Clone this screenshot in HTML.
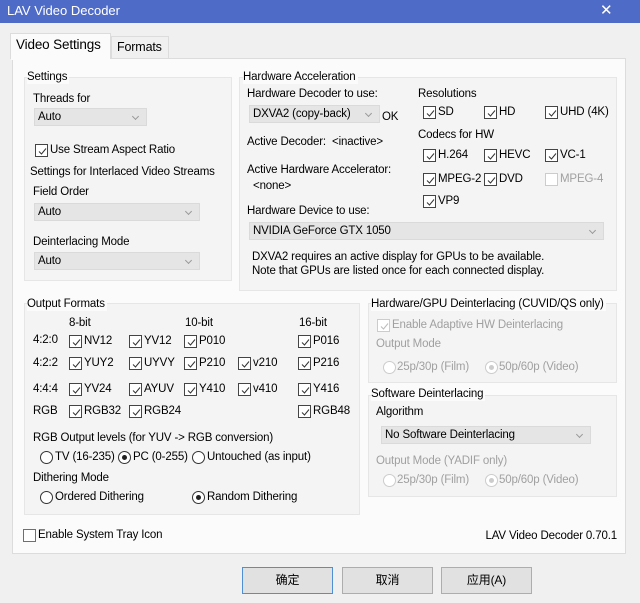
<!DOCTYPE html>
<html><head><meta charset="utf-8"><style>
*{margin:0;padding:0;box-sizing:border-box}
body{width:640px;height:603px;background:#f0f0f0;font-family:"Liberation Sans","Noto Sans CJK SC",sans-serif;font-size:11.5px;letter-spacing:-0.15px;color:#000;position:relative;overflow:hidden}
.a{position:absolute;white-space:nowrap;line-height:14px}
.title{position:absolute;left:0;top:0;width:640px;height:23px;background:#4f6bc8;color:#fff}
.page{position:absolute;left:12px;top:58px;width:614px;height:496px;background:#fbfbfb;border:1px solid #dcdcdc}
.grp{position:absolute;background:#f4f4f4;border:1px solid #e6e6e6}
.combo{position:absolute;height:18px;background:#e5e5e5;border:1px solid #dadada;padding-left:3px;line-height:16px}
.combo:after{content:"";position:absolute;right:8px;top:5px;width:4px;height:4px;border-right:1px solid #999;border-bottom:1px solid #999;transform:rotate(45deg)}
.cb{position:absolute;width:13px;height:13px;border:1px solid #444;background:#fff}
.cb svg{position:absolute;left:1px;top:1px}
.cb.d{border-color:#ccc}
.rb{position:absolute;width:13px;height:13px;border:1px solid #333;border-radius:50%;background:#fff}
.rb.on:after{content:"";position:absolute;left:3px;top:3px;width:5px;height:5px;border-radius:50%;background:#222}
.rb.d{border-color:#ccc}.rb.d.on:after{background:#ccc}
.g{color:#a0a0a0}
.btn{position:absolute;top:567px;width:91px;height:27px;background:#e1e1e1;border:1px solid #adadad;text-align:center;line-height:25px;font-size:12px}
</style></head><body>
<div class="title"><span class="a" style="left:7px;top:3px;font-size:13px;line-height:16px;letter-spacing:0">LAV Video Decoder</span><span class="a" style="left:600px;top:2px;font-size:15px;line-height:18px;font-weight:300">✕</span></div>
<div class="a" style="left:10px;top:33px;width:101px;height:26px;background:#fbfbfb;border:1px solid #dcdcdc;border-bottom:none"></div>
<div class="a" style="left:111px;top:36px;width:58px;height:22px;background:#f0f0f0;border:1px solid #dcdcdc;border-bottom:none"></div>
<div class="page"></div>
<div class="a" style="left:11px;top:34px;width:99px;height:26px;background:#fbfbfb"></div>
<span class="a" style="left:16px;top:37px;font-size:13.5px;line-height:16px">Video Settings</span>
<span class="a" style="left:117px;top:39px;font-size:12.5px;line-height:16px">Formats</span>

<div class="grp" style="left:24px;top:77px;width:208px;height:204px"></div>
<div class="grp" style="left:239px;top:77px;width:378px;height:214px"></div>
<div class="grp" style="left:24px;top:303px;width:336px;height:212px"></div>
<div class="grp" style="left:368px;top:303px;width:249px;height:80px"></div>
<div class="grp" style="left:368px;top:395px;width:249px;height:102px"></div>

<span class="a" style="left:27px;top:70px;background:#fbfbfb;padding-right:2px">Settings</span>
<span class="a" style="left:33px;top:92px">Threads for</span>
<div class="combo" style="left:34px;top:108px;width:113px">Auto</div>
<div class="cb" style="left:35px;top:144px"><svg width="11" height="11"><path d="M2 5.5 L4.5 8 L9 2.5" fill="none" stroke="#333" stroke-width="1"/></svg></div>
<span class="a" style="left:50px;top:143px">Use Stream Aspect Ratio</span>
<span class="a" style="left:30px;top:165px">Settings for Interlaced Video Streams</span>
<span class="a" style="left:33px;top:185px">Field Order</span>
<div class="combo" style="left:34px;top:203px;width:166px">Auto</div>
<span class="a" style="left:33px;top:235px">Deinterlacing Mode</span>
<div class="combo" style="left:34px;top:252px;width:166px">Auto</div>

<span class="a" style="left:243px;top:70px;background:#fbfbfb;padding-right:2px">Hardware Acceleration</span>
<span class="a" style="left:247px;top:87px">Hardware Decoder to use:</span>
<div class="combo" style="left:249px;top:105px;width:131px">DXVA2 (copy-back)</div>
<span class="a" style="left:382px;top:110px">OK</span>
<span class="a" style="left:247px;top:135px">Active Decoder:&nbsp; &lt;inactive&gt;</span>
<span class="a" style="left:247px;top:163px">Active Hardware Accelerator:</span>
<span class="a" style="left:253px;top:179px">&lt;none&gt;</span>
<span class="a" style="left:247px;top:204px">Hardware Device to use:</span>
<div class="combo" style="left:249px;top:222px;width:355px">NVIDIA GeForce GTX 1050</div>
<span class="a" style="left:252px;top:250px">DXVA2 requires an active display for GPUs to be available.</span>
<span class="a" style="left:252px;top:264px">Note that GPUs are listed once for each connected display.</span>
<span class="a" style="left:418px;top:87px">Resolutions</span>
<span class="a" style="left:418px;top:128px">Codecs for HW</span>

<span class="a" style="left:27px;top:297px;background:#fbfbfb;padding-right:2px">Output Formats</span>
<span class="a" style="left:69px;top:316px">8-bit</span>
<span class="a" style="left:185px;top:316px">10-bit</span>
<span class="a" style="left:299px;top:316px">16-bit</span>
<span class="a" style="left:33px;top:333px">4:2:0</span>
<span class="a" style="left:33px;top:356px">4:2:2</span>
<span class="a" style="left:33px;top:382px">4:4:4</span>
<span class="a" style="left:33px;top:404px">RGB</span>
<span class="a" style="left:33px;top:431px">RGB Output levels (for YUV -&gt; RGB conversion)</span>
<div class="rb" style="left:40px;top:451px"></div><span class="a" style="left:55px;top:450px">TV (16-235)</span>
<div class="rb on" style="left:118px;top:451px"></div><span class="a" style="left:133px;top:450px">PC (0-255)</span>
<div class="rb" style="left:192px;top:451px"></div><span class="a" style="left:207px;top:450px">Untouched (as input)</span>
<span class="a" style="left:33px;top:471px">Dithering Mode</span>
<div class="rb" style="left:40px;top:491px"></div><span class="a" style="left:55px;top:490px">Ordered Dithering</span>
<div class="rb on" style="left:192px;top:491px"></div><span class="a" style="left:207px;top:490px">Random Dithering</span>

<span class="a" style="left:371px;top:297px;background:#fbfbfb;padding-right:2px">Hardware/GPU Deinterlacing (CUVID/QS only)</span>
<div class="cb d" style="left:377px;top:319px"><svg width="11" height="11"><path d="M2 5.5 L4.5 8 L9 2.5" fill="none" stroke="#bbb"/></svg></div>
<span class="a g" style="left:392px;top:318px">Enable Adaptive HW Deinterlacing</span>
<span class="a g" style="left:376px;top:337px">Output Mode</span>
<div class="rb d" style="left:383px;top:361px"></div><span class="a g" style="left:397px;top:360px">25p/30p (Film)</span>
<div class="rb d on" style="left:485px;top:361px"></div><span class="a g" style="left:499px;top:360px">50p/60p (Video)</span>
<span class="a" style="left:371px;top:387px;background:#fbfbfb;padding-right:2px">Software Deinterlacing</span>
<span class="a" style="left:376px;top:405px">Algorithm</span>
<div class="combo" style="left:381px;top:426px;width:210px">No Software Deinterlacing</div>
<span class="a g" style="left:376px;top:454px">Output Mode (YADIF only)</span>
<div class="rb d" style="left:383px;top:474px"></div><span class="a g" style="left:397px;top:473px">25p/30p (Film)</span>
<div class="rb d on" style="left:485px;top:474px"></div><span class="a g" style="left:499px;top:473px">50p/60p (Video)</span>

<div class="cb" style="left:23px;top:529px;border-color:#2a7fd4"></div>
<span class="a" style="left:38px;top:528px">Enable System Tray Icon</span>
<span class="a" style="right:23px;top:529px">LAV Video Decoder 0.70.1</span>

<div class="btn" style="left:242px;border-color:#4f8fd4">确定</div>
<div class="btn" style="left:342px">取消</div>
<div class="btn" style="left:441px">应用(A)</div>

<div class="cb" style="left:423px;top:106px"><svg width="11" height="11"><path d="M2 5.5 L4.5 8 L9 2.5" fill="none" stroke="#333"/></svg></div><span class="a" style="left:438px;top:105px">SD</span>
<div class="cb" style="left:484px;top:106px"><svg width="11" height="11"><path d="M2 5.5 L4.5 8 L9 2.5" fill="none" stroke="#333"/></svg></div><span class="a" style="left:499px;top:105px">HD</span>
<div class="cb" style="left:545px;top:106px"><svg width="11" height="11"><path d="M2 5.5 L4.5 8 L9 2.5" fill="none" stroke="#333"/></svg></div><span class="a" style="left:560px;top:105px">UHD (4K)</span>
<div class="cb" style="left:423px;top:149px"><svg width="11" height="11"><path d="M2 5.5 L4.5 8 L9 2.5" fill="none" stroke="#333"/></svg></div><span class="a" style="left:438px;top:148px">H.264</span>
<div class="cb" style="left:484px;top:149px"><svg width="11" height="11"><path d="M2 5.5 L4.5 8 L9 2.5" fill="none" stroke="#333"/></svg></div><span class="a" style="left:499px;top:148px">HEVC</span>
<div class="cb" style="left:545px;top:149px"><svg width="11" height="11"><path d="M2 5.5 L4.5 8 L9 2.5" fill="none" stroke="#333"/></svg></div><span class="a" style="left:560px;top:148px">VC-1</span>
<div class="cb" style="left:423px;top:173px"><svg width="11" height="11"><path d="M2 5.5 L4.5 8 L9 2.5" fill="none" stroke="#333"/></svg></div><span class="a" style="left:438px;top:172px">MPEG-2</span>
<div class="cb" style="left:484px;top:173px"><svg width="11" height="11"><path d="M2 5.5 L4.5 8 L9 2.5" fill="none" stroke="#333"/></svg></div><span class="a" style="left:499px;top:172px">DVD</span>
<div class="cb d" style="left:545px;top:173px"></div><span class="a g" style="left:560px;top:172px">MPEG-4</span>
<div class="cb" style="left:423px;top:195px"><svg width="11" height="11"><path d="M2 5.5 L4.5 8 L9 2.5" fill="none" stroke="#333"/></svg></div><span class="a" style="left:438px;top:194px">VP9</span>

<div class="cb" style="left:69px;top:335px"><svg width="11" height="11"><path d="M2 5.5 L4.5 8 L9 2.5" fill="none" stroke="#333"/></svg></div><span class="a" style="left:84px;top:334px">NV12</span>
<div class="cb" style="left:129px;top:335px"><svg width="11" height="11"><path d="M2 5.5 L4.5 8 L9 2.5" fill="none" stroke="#333"/></svg></div><span class="a" style="left:144px;top:334px">YV12</span>
<div class="cb" style="left:184px;top:335px"><svg width="11" height="11"><path d="M2 5.5 L4.5 8 L9 2.5" fill="none" stroke="#333"/></svg></div><span class="a" style="left:199px;top:334px">P010</span>
<div class="cb" style="left:298px;top:335px"><svg width="11" height="11"><path d="M2 5.5 L4.5 8 L9 2.5" fill="none" stroke="#333"/></svg></div><span class="a" style="left:313px;top:334px">P016</span>

<div class="cb" style="left:69px;top:357px"><svg width="11" height="11"><path d="M2 5.5 L4.5 8 L9 2.5" fill="none" stroke="#333"/></svg></div><span class="a" style="left:84px;top:356px">YUY2</span>
<div class="cb" style="left:129px;top:357px"><svg width="11" height="11"><path d="M2 5.5 L4.5 8 L9 2.5" fill="none" stroke="#333"/></svg></div><span class="a" style="left:144px;top:356px">UYVY</span>
<div class="cb" style="left:184px;top:357px"><svg width="11" height="11"><path d="M2 5.5 L4.5 8 L9 2.5" fill="none" stroke="#333"/></svg></div><span class="a" style="left:199px;top:356px">P210</span>
<div class="cb" style="left:238px;top:357px"><svg width="11" height="11"><path d="M2 5.5 L4.5 8 L9 2.5" fill="none" stroke="#333"/></svg></div><span class="a" style="left:253px;top:356px">v210</span>
<div class="cb" style="left:298px;top:357px"><svg width="11" height="11"><path d="M2 5.5 L4.5 8 L9 2.5" fill="none" stroke="#333"/></svg></div><span class="a" style="left:313px;top:356px">P216</span>

<div class="cb" style="left:69px;top:383px"><svg width="11" height="11"><path d="M2 5.5 L4.5 8 L9 2.5" fill="none" stroke="#333"/></svg></div><span class="a" style="left:84px;top:382px">YV24</span>
<div class="cb" style="left:129px;top:383px"><svg width="11" height="11"><path d="M2 5.5 L4.5 8 L9 2.5" fill="none" stroke="#333"/></svg></div><span class="a" style="left:144px;top:382px">AYUV</span>
<div class="cb" style="left:184px;top:383px"><svg width="11" height="11"><path d="M2 5.5 L4.5 8 L9 2.5" fill="none" stroke="#333"/></svg></div><span class="a" style="left:199px;top:382px">Y410</span>
<div class="cb" style="left:238px;top:383px"><svg width="11" height="11"><path d="M2 5.5 L4.5 8 L9 2.5" fill="none" stroke="#333"/></svg></div><span class="a" style="left:253px;top:382px">v410</span>
<div class="cb" style="left:298px;top:383px"><svg width="11" height="11"><path d="M2 5.5 L4.5 8 L9 2.5" fill="none" stroke="#333"/></svg></div><span class="a" style="left:313px;top:382px">Y416</span>

<div class="cb" style="left:69px;top:405px"><svg width="11" height="11"><path d="M2 5.5 L4.5 8 L9 2.5" fill="none" stroke="#333"/></svg></div><span class="a" style="left:84px;top:404px">RGB32</span>
<div class="cb" style="left:129px;top:405px"><svg width="11" height="11"><path d="M2 5.5 L4.5 8 L9 2.5" fill="none" stroke="#333"/></svg></div><span class="a" style="left:144px;top:404px">RGB24</span>
<div class="cb" style="left:298px;top:405px"><svg width="11" height="11"><path d="M2 5.5 L4.5 8 L9 2.5" fill="none" stroke="#333"/></svg></div><span class="a" style="left:313px;top:404px">RGB48</span>
</body></html>
